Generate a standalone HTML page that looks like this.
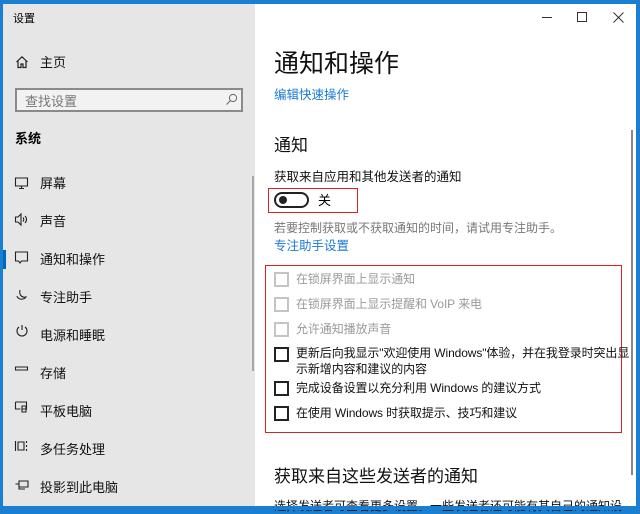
<!DOCTYPE html>
<html><head><meta charset="utf-8"><style>
*{margin:0;padding:0;box-sizing:border-box}
body{width:640px;height:510px;overflow:hidden;background:#1a7fd0;font-family:"Liberation Sans","Noto Sans CJK SC",sans-serif;position:relative;color:#000}
.a{position:absolute;white-space:nowrap}
#side{position:absolute;left:3px;top:4px;width:252px;height:502px;background:#e6e6e6}
#main{position:absolute;left:255px;top:4px;width:381px;height:502px;background:#fff}
.it{font-size:13px;color:#111}
.cb{position:absolute;width:15px;height:15px;border:2px solid #222;left:274px}
.cb.g{border-color:#c4c4c4}
.ct{position:absolute;left:296px;font-size:12px;color:#111;white-space:nowrap;letter-spacing:-0.1px}
.ct.g{color:#9a9a9a}
</style></head><body>
<div id="side"></div>
<div id="main"></div>
<div class="a" style="left:13px;top:10px;font-size:11px">设置</div>
<svg class="a" style="left:15px;top:55px" width="14" height="14" viewBox="0 0 14 14" fill="none" stroke="#222" stroke-width="1.2"><path d="M1.5 7L7 1.8 12.5 7M3 5.8V12.5h3V9h2v3.5h3V5.8"/></svg>
<div class="a it" style="left:40px;top:52px">主页</div>
<div class="a" style="left:15px;top:88px;width:228px;height:24px;border:2px solid #8a8a8a;background:#f2f2f2"></div>
<div class="a" style="left:25px;top:91px;font-size:13px;color:#777">查找设置</div>
<svg class="a" style="left:225px;top:93px" width="13" height="13" viewBox="0 0 13 13" fill="none" stroke="#666" stroke-width="1"><circle cx="8" cy="5" r="3.6"/><path d="M5.4 7.6L1.5 11.5"/></svg>
<div class="a" style="left:15px;top:128px;font-size:13px;font-weight:bold">系统</div>
<div class="a" style="left:3px;top:250px;width:3px;height:19px;background:#0067c0"></div>
<div class="a" style="left:252px;top:176px;width:2px;height:195px;background:#a8a8a8"></div>
<svg class="a" style="left:14px;top:176px" width="16" height="320" viewBox="0 0 16 320" fill="none" stroke="#222" stroke-width="1.1">
<path d="M1.5 2h12v8h-12zM7.5 10v2.5M5 12.5h5"/>
<path d="M1.5 41h2.5l3-3v11l-3-3h-2.5zM9 41.5c1 1 1 3 0 4M11 40c2 2 2 5 0 7"/>
<path d="M1.5 76h12v9h-6l-1.5 2-1.5-2h-3z"/>
<path d="M6 114c-1 4 1 8 6 7-2 3-8 3-9-1"/>
<path d="M5 151a5 5 0 1 0 6 0M8 149v5"/>
<path d="M1.5 191h12v3h-12z"/>
<path d="M1.5 226h11v7h-4M1.5 226v7h5M8 230h4v6h-4z"/>
<path d="M1.5 265v10M4 266h6v8h-6zM12.5 265v2M12.5 269v2M12.5 273v2"/>
<path d="M5 305h9v6h-9zM1.5 308h3.5v5h6"/>
</svg>
<div class="a it" style="left:40px;top:173px">屏幕</div>
<div class="a it" style="left:40px;top:211px">声音</div>
<div class="a it" style="left:40px;top:249px">通知和操作</div>
<div class="a it" style="left:40px;top:287px">专注助手</div>
<div class="a it" style="left:40px;top:325px">电源和睡眠</div>
<div class="a it" style="left:40px;top:363px">存储</div>
<div class="a it" style="left:40px;top:401px">平板电脑</div>
<div class="a it" style="left:40px;top:439px">多任务处理</div>
<div class="a it" style="left:40px;top:477px">投影到此电脑</div>

<div class="a" style="left:542px;top:17px;width:10px;height:1px;background:#333"></div>
<div class="a" style="left:577px;top:12px;width:10px;height:10px;border:1px solid #333"></div>
<svg class="a" style="left:613px;top:12px" width="11" height="11" viewBox="0 0 11 11" stroke="#333" stroke-width="1"><path d="M0.5 0.5l10 10M10.5 0.5l-10 10"/></svg>
<div class="a" style="left:631px;top:130px;width:2px;height:345px;background:#888"></div>

<div class="a" style="left:274px;top:44px;font-size:25px;color:#111">通知和操作</div>
<div class="a" style="left:274px;top:84px;font-size:12.5px;color:#1a7ad8">编辑快速操作</div>
<div class="a" style="left:274px;top:131px;font-size:17px;color:#111">通知</div>
<div class="a" style="left:274px;top:166px;font-size:12.5px;color:#111">获取来自应用和其他发送者的通知</div>
<div class="a" style="left:268px;top:188px;width:90px;height:25px;border:1.5px solid #e02020"></div>
<div class="a" style="left:274px;top:192px;width:35px;height:16px;border:2px solid #222;border-radius:8px"></div>
<div class="a" style="left:279px;top:196px;width:8px;height:8px;background:#222;border-radius:50%"></div>
<div class="a" style="left:318px;top:190px;font-size:13px">关</div>
<div class="a" style="left:274px;top:219px;font-size:12px;color:#777">若要控制获取或不获取通知的时间，请试用专注助手。</div>
<div class="a" style="left:274px;top:235px;font-size:12.5px;color:#1a7ad8">专注助手设置</div>
<div class="a" style="left:265px;top:265px;width:357px;height:168px;border:1.5px solid #e02020"></div>
<div class="cb g" style="top:272px"></div><div class="ct g" style="top:270px">在锁屏界面上显示通知</div>
<div class="cb g" style="top:297px"></div><div class="ct g" style="top:295px">在锁屏界面上显示提醒和 VoIP 来电</div>
<div class="cb g" style="top:322px"></div><div class="ct g" style="top:320px">允许通知播放声音</div>
<div class="cb" style="top:347px"></div><div class="ct" style="top:345px;line-height:16px">更新后向我显示"欢迎使用 Windows"体验，并在我登录时突出显<br>示新增内容和建议的内容</div>
<div class="cb" style="top:381px"></div><div class="ct" style="top:379px">完成设备设置以充分利用 Windows 的建议方式</div>
<div class="cb" style="top:406px"></div><div class="ct" style="top:404px">在使用 Windows 时获取提示、技巧和建议</div>
<div class="a" style="left:274px;top:462px;font-size:17px;color:#111">获取来自这些发送者的通知</div>
<div class="a" style="left:274px;top:497px;font-size:12px;color:#111">选择发送者可查看更多设置。一些发送者还可能有其自己的通知设</div>
<div class="a" style="left:0;top:506px;width:640px;height:4px;background:#1a7fd0"></div>
</body></html>
